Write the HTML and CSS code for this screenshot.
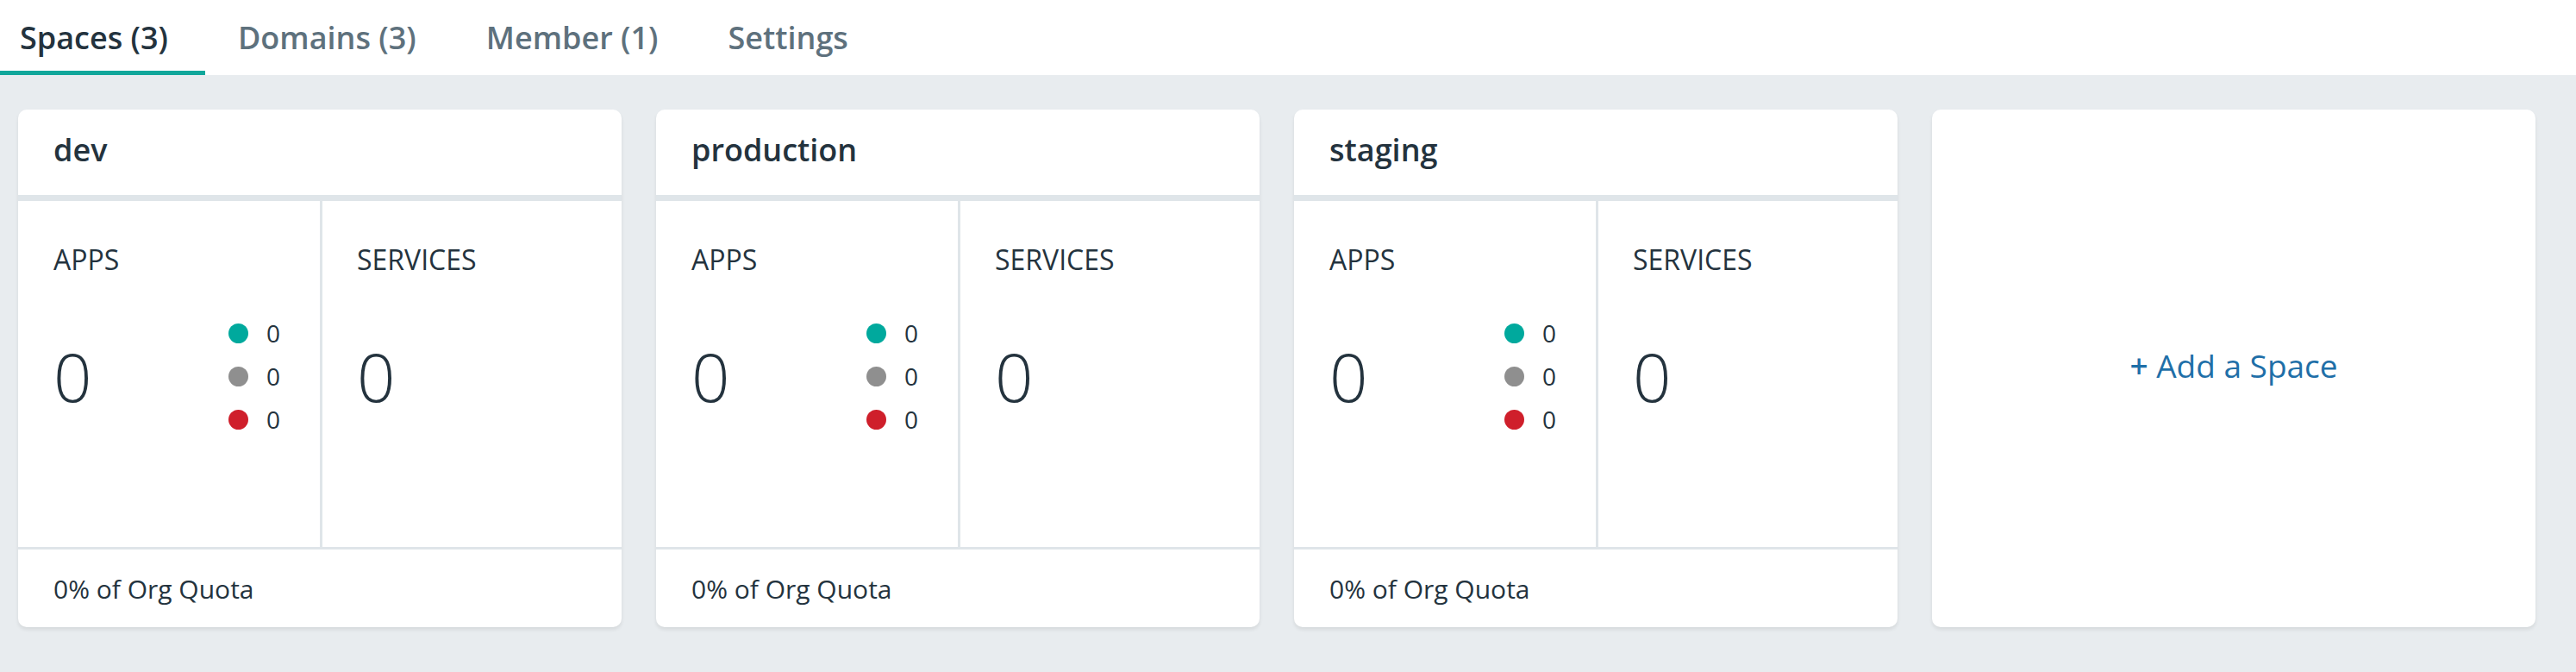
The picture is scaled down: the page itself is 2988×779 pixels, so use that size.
FILE: index.html
```html
<!DOCTYPE html>
<html lang="en">
<head>
<meta charset="utf-8">
<title>Spaces</title>
<link rel="stylesheet" href="styles.css">
</head>
<body>
<nav class="tabs">
  <a class="tab tab-active">Spaces (3)</a>
  <a class="tab">Domains (3)</a>
  <a class="tab">Member (1)</a>
  <a class="tab">Settings</a>
</nav>
<main class="grid">
  <section class="card">
    <header class="card-head">dev</header>
    <div class="stats">
      <div class="stat">
        <div class="stat-label">APPS</div>
        <div class="stat-row">
          <div class="stat-num">0</div>
          <ul class="legend">
            <li class="legend-item"><span class="dot dot-green"></span><span class="legend-num">0</span></li>
            <li class="legend-item"><span class="dot dot-gray"></span><span class="legend-num">0</span></li>
            <li class="legend-item"><span class="dot dot-red"></span><span class="legend-num">0</span></li>
          </ul>
        </div>
      </div>
      <div class="stat stat-right">
        <div class="stat-label">SERVICES</div>
        <div class="stat-row">
          <div class="stat-num">0</div>
        </div>
      </div>
    </div>
    <footer class="card-foot">0% of Org Quota</footer>
  </section>
  <section class="card">
    <header class="card-head">production</header>
    <div class="stats">
      <div class="stat">
        <div class="stat-label">APPS</div>
        <div class="stat-row">
          <div class="stat-num">0</div>
          <ul class="legend">
            <li class="legend-item"><span class="dot dot-green"></span><span class="legend-num">0</span></li>
            <li class="legend-item"><span class="dot dot-gray"></span><span class="legend-num">0</span></li>
            <li class="legend-item"><span class="dot dot-red"></span><span class="legend-num">0</span></li>
          </ul>
        </div>
      </div>
      <div class="stat stat-right">
        <div class="stat-label">SERVICES</div>
        <div class="stat-row">
          <div class="stat-num">0</div>
        </div>
      </div>
    </div>
    <footer class="card-foot">0% of Org Quota</footer>
  </section>
  <section class="card">
    <header class="card-head">staging</header>
    <div class="stats">
      <div class="stat">
        <div class="stat-label">APPS</div>
        <div class="stat-row">
          <div class="stat-num">0</div>
          <ul class="legend">
            <li class="legend-item"><span class="dot dot-green"></span><span class="legend-num">0</span></li>
            <li class="legend-item"><span class="dot dot-gray"></span><span class="legend-num">0</span></li>
            <li class="legend-item"><span class="dot dot-red"></span><span class="legend-num">0</span></li>
          </ul>
        </div>
      </div>
      <div class="stat stat-right">
        <div class="stat-label">SERVICES</div>
        <div class="stat-row">
          <div class="stat-num">0</div>
        </div>
      </div>
    </div>
    <footer class="card-foot">0% of Org Quota</footer>
  </section>
  <section class="card card-add">
    <a class="add-link"><span class="add-plus">+</span> Add a Space</a>
  </section>
</main>
</body>
</html>
```

FILE: styles.css
```css
* { box-sizing: border-box; }

html, body {
  margin: 0;
  padding: 0;
}

body {
  background: #e8ecef;
  font-family: "Source Sans Pro", "Open Sans", Lato, sans-serif;
  color: #24333e;
  width: 2988px;
  height: 779px;
  overflow: hidden;
}

.tabs {
  display: flex;
  gap: 15px;
  height: 87px;
  background: #ffffff;
}

.tab {
  display: flex;
  align-items: center;
  padding: 4px 43px 0 23px;
  font-size: 36px;
  font-weight: 600;
  color: #5e717d;
  border-bottom: 5px solid transparent;
}

.tab-active {
  color: #24333e;
  border-bottom-color: #10a79b;
}

.grid {
  display: grid;
  grid-template-columns: repeat(4, 700px);
  gap: 40px;
  padding: 40px 0 0 21px;
}

.card {
  height: 600px;
  background: #ffffff;
  border-radius: 10px;
  box-shadow: 0 3px 4px rgba(0, 0, 0, 0.08);
  display: flex;
  flex-direction: column;
  overflow: hidden;
}

.card-head {
  height: 106px;
  padding: 0 41px 7px;
  display: flex;
  align-items: center;
  font-size: 36px;
  font-weight: 600;
  border-bottom: 7px solid #dfe5e9;
}

.stats {
  height: 404px;
  display: grid;
  grid-template-columns: 1fr 1fr;
  border-bottom: 3px solid #dfe5e9;
}

.stat {
  padding: 49px 46px 0 41px;
}

.stat-right {
  border-left: 3px solid #dfe5e9;
  padding-left: 40px;
}

.stat-label {
  font-size: 32px;
  font-weight: 400;
  line-height: 38px;
}

.stat-row {
  display: flex;
  justify-content: space-between;
  align-items: center;
  margin-top: 41px;
  height: 150px;
}

.stat-num {
  font-size: 78px;
  font-weight: 300;
  line-height: 1;
}

.legend {
  list-style: none;
  margin: 0;
  padding: 0;
  display: flex;
  flex-direction: column;
}

.legend-item {
  display: flex;
  align-items: center;
  gap: 21px;
  height: 50px;
}

.dot {
  width: 23px;
  height: 23px;
  border-radius: 50%;
}

.dot-green { background: #00a99d; }
.dot-gray { background: #8f8f8f; }
.dot-red { background: #cf1f2b; }

.legend-num {
  font-size: 28px;
  font-weight: 400;
  line-height: 1;
}

.card-foot {
  flex: 1;
  display: flex;
  align-items: center;
  padding: 0 41px;
  font-size: 30px;
}

.card-add {
  align-items: center;
  justify-content: center;
}

.add-link {
  font-size: 37px;
  color: #1f6fa8;
  padding-bottom: 8px;
}

.add-plus {
  font-weight: 600;
}
```
